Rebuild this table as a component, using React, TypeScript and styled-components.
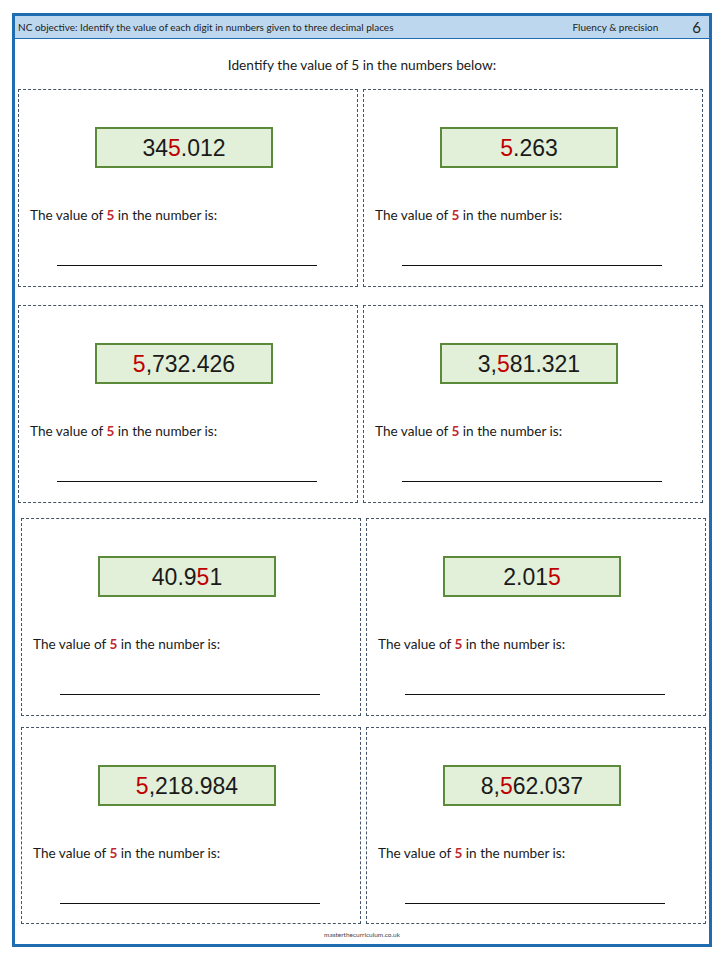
import { createGlobalStyle, styled } from 'styled-components'

const GlobalStyle = createGlobalStyle`
  html, body {
    margin: 0;
    padding: 0;
    background: #ffffff;
  }
  body {
    width: 720px;
    height: 960px;
    font-family: 'Lato', 'Noto Sans', sans-serif;
    color: #1a1a1a;
  }
`

const Frame = styled.div`
  box-sizing: border-box;
  margin: 13px 0 0 12px;
  width: 700px;
  height: 934px;
  border: 3px solid #1f6db0;
  display: flex;
  flex-direction: column;
`

const Header = styled.header`
  height: 22px;
  background: #bdd7ee;
  border-bottom: 1.5px solid #1f6db0;
  display: flex;
  align-items: center;
  padding: 0 8px 0 3px;
  font-size: 10px;
  color: #222;

  .objective {
    flex: 1;
  }
  .strand {
    margin-right: 34px;
  }
  .page {
    font-size: 15px;
  }
`

const Title = styled.h1`
  margin: 0;
  height: 50px;
  display: flex;
  align-items: center;
  justify-content: center;
  font-size: 13.7px;
  font-weight: 400;
  padding-top: 1px;
`

const Row = styled.div<{ $gap: number; $shift: number }>`
  display: grid;
  grid-template-columns: 340px 340px;
  gap: 5px;
  margin-top: ${p => p.$gap}px;
  padding-left: ${p => 3 + p.$shift}px;
`

const Card = styled.div<{ $h: number }>`
  box-sizing: border-box;
  height: ${p => p.$h}px;
  border: 1px dashed #44546a;
  display: flex;
  flex-direction: column;
  align-items: flex-start;
  padding: 37px 0 0 11px;
`

const NumberBox = styled.div`
  box-sizing: border-box;
  margin-left: 65px;
  width: 178px;
  height: 41px;
  border: 2px solid #5b8a3a;
  background: #e2efd9;
  display: flex;
  align-items: center;
  justify-content: center;
  font-family: 'Liberation Sans', Arial, sans-serif;
  font-size: 23px;
  color: #1a1a1a;
  padding-top: 1px;
`

const Red = styled.span`
  color: #c00000;
`

const Sentence = styled.p`
  margin: 38px 0 0;
  font-size: 13.6px;
  line-height: 18px;

  b {
    color: #c0282d;
    font-weight: 700;
  }
`

const AnswerLine = styled.div`
  margin: 41px 0 0 27px;
  width: 260px;
  border-top: 1.2px solid #111;
`

const Footer = styled.footer`
  margin-top: auto;
  height: 20px;
  display: flex;
  align-items: center;
  justify-content: center;
  font-size: 6.5px;
  color: #444;
`

type Item = { before: string; digit: string; after: string }

const rows: { gap: number; shift: number; h: number; items: Item[] }[] = [
  {
    gap: 0,
    shift: 0,
    h: 198,
    items: [
      { before: '34', digit: '5', after: '.012' },
      { before: '', digit: '5', after: '.263' },
    ],
  },
  {
    gap: 18,
    shift: 0,
    h: 198,
    items: [
      { before: '', digit: '5', after: ',732.426' },
      { before: '3,', digit: '5', after: '81.321' },
    ],
  },
  {
    gap: 15,
    shift: 3,
    h: 198,
    items: [
      { before: '40.9', digit: '5', after: '1' },
      { before: '2.01', digit: '5', after: '' },
    ],
  },
  {
    gap: 11,
    shift: 3,
    h: 197,
    items: [
      { before: '', digit: '5', after: ',218.984' },
      { before: '8,', digit: '5', after: '62.037' },
    ],
  },
]

export default function App() {
  return (
    <>
      <GlobalStyle />
      <Frame>
        <Header>
          <span className="objective">
            NC objective: Identify the value of each digit in numbers given to three decimal places
          </span>
          <span className="strand">Fluency &amp; precision</span>
          <span className="page">6</span>
        </Header>
        <Title>Identify the value of 5 in the numbers below:</Title>
        {rows.map((row, i) => (
          <Row key={i} $gap={row.gap} $shift={row.shift}>
            {row.items.map((it, j) => (
              <Card key={j} $h={row.h}>
                <NumberBox>
                  {it.before}
                  <Red>{it.digit}</Red>
                  {it.after}
                </NumberBox>
                <Sentence>
                  The value of <b>5</b> in the number is:
                </Sentence>
                <AnswerLine />
              </Card>
            ))}
          </Row>
        ))}
        <Footer>masterthecurriculum.co.uk</Footer>
      </Frame>
    </>
  )
}
